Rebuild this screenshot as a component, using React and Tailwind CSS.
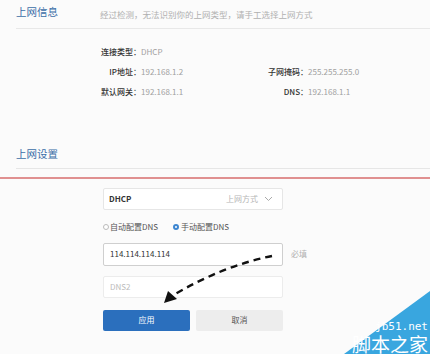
import React from 'react';

const FONT = { fontFamily: '"Noto Sans CJK SC", "Noto Sans", sans-serif' };

const InfoRow = ({ label, value, label2, value2 }) => (
  <>
    <div className="text-right text-[#333] font-medium">{label}</div>
    <div className="text-[#a0a0a0]">{value}</div>
    <div className="text-right text-[#333] font-medium whitespace-nowrap">{label2}</div>
    <div className="text-[#a0a0a0]">{value2}</div>
  </>
);

const App = () => {
  return (
    <div className="relative w-[430px] h-[354px] overflow-hidden bg-[#fbfbfb]" style={FONT}>
      {/* 上网信息 */}
      <div className="ml-4 h-[29px] flex items-start border-b border-[#e8e8e8]">
        <div className="w-[84px] text-[10.5px] leading-none text-[#3b6ea8] pt-[7px]">上网信息</div>
        <div className="text-[8.5px] leading-none text-[#b0b0b0] pt-[10px]">经过检测，无法识别你的上网类型，请手工选择上网方式</div>
      </div>

      <div className="ml-[100px] mt-[13px] grid grid-cols-[41px_123px_44px_auto] auto-rows-[20px] items-center text-[8px] leading-none">
        <InfoRow label="连接类型：" value="DHCP" label2="" value2="" />
        <InfoRow label="IP地址：" value="192.168.1.2" label2="子网掩码：" value2="255.255.255.0" />
        <InfoRow label="默认网关：" value="192.168.1.1" label2="DNS：" value2="192.168.1.1" />
      </div>

      {/* 上网设置 */}
      <div className="ml-4 mt-[38px] h-[29px] flex items-center border-b border-[#e6e6e6]">
        <div className="text-[10.5px] text-[#3b6ea8]">上网设置</div>
      </div>
      <div className="mt-[8px] h-[1.5px] bg-[#e09090]" />

      <div className="ml-[103px] mt-[9px] w-[180px] flex flex-col text-[8px]">
        <div className="h-[22px] bg-white border border-[#e6e6e6] rounded-[2px] flex items-center px-[5px]">
          <span className="font-bold text-[#333]">DHCP</span>
          <span className="ml-auto text-[#b5b5b5]">上网方式</span>
          <svg className="ml-[6px] mr-[4px]" width="9" height="6" viewBox="0 0 9 6" fill="none">
            <path d="M1 1l3.5 3.5L8 1" stroke="#aaa" strokeWidth="1" />
          </svg>
        </div>

        <div className="mt-[10px] h-[14px] flex items-center text-[#555]">
          <span className="w-[6px] h-[6px] rounded-full border border-[#bbb] bg-white" />
          <span className="ml-[1px]">自动配置DNS</span>
          <span className="ml-[15px] w-[6px] h-[6px] rounded-full border-[2px] border-[#3d86d0] bg-white" />
          <span className="ml-[2px]">手动配置DNS</span>
        </div>

        <div className="mt-[9px] flex items-center">
          <div className="w-[180px] h-[23px] bg-white border border-[#cfcfcf] rounded-[2px] flex items-center px-[6px] text-[#333] shrink-0">
            114.114.114.114
          </div>
          <span className="ml-[8px] text-[#b0b0b0] whitespace-nowrap">必填</span>
        </div>

        <div className="mt-[10px] h-[22px] bg-white border border-[#ececec] rounded-[2px] flex items-center px-[6px] text-[#bbb]">
          DNS2
        </div>

        <div className="mt-[12px] flex gap-[6px]">
          <button className="w-[87px] h-[21px] rounded-[2px] bg-[#2b6fbd] text-white text-[8px]">应用</button>
          <button className="w-[87px] h-[21px] rounded-[2px] bg-[#ededed] text-[#555] text-[8px]">取消</button>
        </div>
      </div>

      {/* dashed arrow */}
      <svg className="absolute left-0 top-0 pointer-events-none" width="430" height="354">
        <path d="M272 256 Q 222 266 172 296" stroke="#111" strokeWidth="2.4" fill="none" strokeDasharray="7 5" />
        <path d="M164 303 L168 291 L177 299 Z" fill="#111" />
      </svg>

      {/* watermark */}
      <div className="absolute right-0 bottom-0 w-[86px] h-[63px] bg-[#39a6df] [clip-path:polygon(100%_0,100%_100%,0_100%)]" />
      <div className="absolute right-[2px] bottom-[22px] text-white text-[11px] leading-none" style={{ fontFamily: '"DejaVu Sans Mono", monospace' }}>jb51.net</div>
      <div className="absolute right-[2px] bottom-[1px] text-white text-[19px] leading-none" style={FONT}>脚本之家</div>
    </div>
  );
};

export default App;
